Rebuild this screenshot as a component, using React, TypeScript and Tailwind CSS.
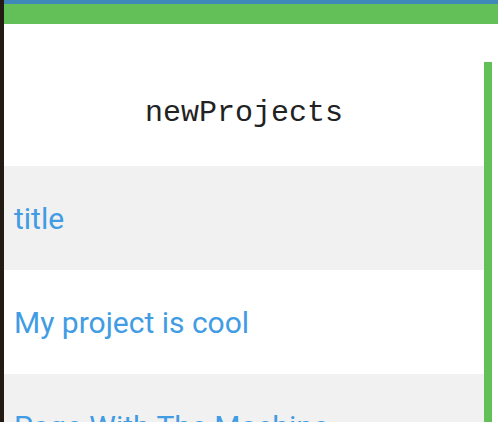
import React from 'react';

const rows = ['title', 'My project is cool', 'Page With The Machine', 'Another one'];

export default function App() {
  return (
    <div className="flex h-[422px] w-[498px] overflow-hidden bg-white">
      <div className="w-[4px] shrink-0 bg-[#231b13]" />
      <div className="flex flex-1 flex-col min-w-0">
        <div className="h-[4px] bg-[#3f89b8]" />
        <div className="h-[20px] bg-[#63c058]" />
        <div className="flex flex-1 min-h-0">
          <div className="w-[480px] shrink-0 overflow-hidden">
            <div className="h-[142px] pt-[67px] text-center">
              <h1
                className="text-[30px] leading-normal text-[#222]"
                style={{ fontFamily: '"Liberation Mono", "Courier New", monospace' }}
              >
                newProjects
              </h1>
            </div>
            {rows.map((r, i) => (
              <div
                key={r}
                className={`flex h-[104px] items-center px-[10px] ${i % 2 === 0 ? 'bg-[#f1f1f1]' : 'bg-white'}`}
              >
                <span
                  className="text-[30px] leading-normal text-[#419ce3]"
                  style={{ fontFamily: 'Roboto, "Noto Sans", sans-serif' }}
                >
                  {r}
                </span>
              </div>
            ))}
          </div>
          <div className="flex w-[14px] shrink-0 flex-col">
            <div className="mt-[38px] w-[8px] flex-1 bg-[#63c058]" />
          </div>
        </div>
      </div>
    </div>
  );
}
